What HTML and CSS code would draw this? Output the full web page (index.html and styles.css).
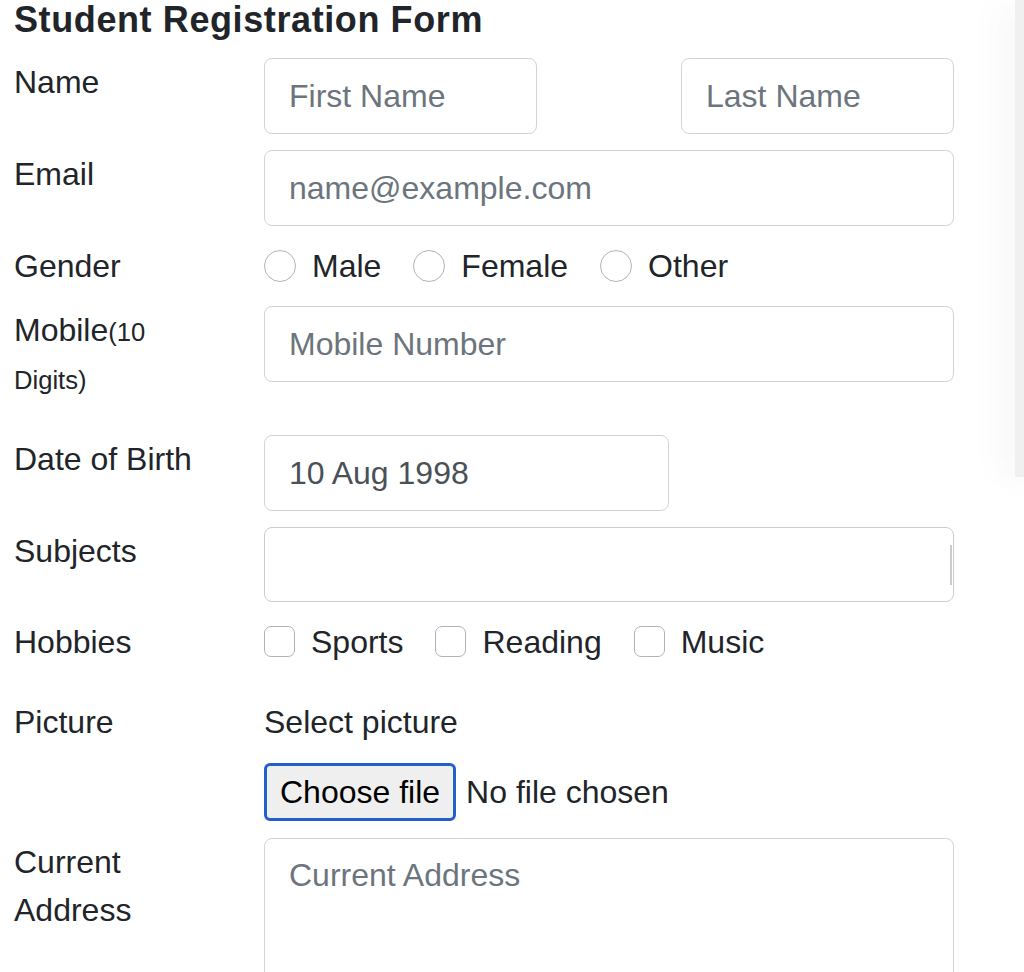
FILE: index.html
```html
<!DOCTYPE html>
<html lang="en">
<head>
<meta charset="utf-8">
<title>Student Registration Form</title>
<link rel="stylesheet" href="styles.css">
</head>
<body>
<div class="page">
  <h1 class="title">Student Registration Form</h1>
  <form class="form">
    <div class="row">
      <label class="lbl">Name</label>
      <div class="field split">
        <input class="ctl half" type="text" placeholder="First Name">
        <input class="ctl half" type="text" placeholder="Last Name">
      </div>
    </div>
    <div class="row">
      <label class="lbl">Email</label>
      <div class="field">
        <input class="ctl" type="text" placeholder="name@example.com">
      </div>
    </div>
    <div class="row">
      <label class="lbl">Gender</label>
      <div class="field checks">
        <label class="check"><input class="radio" type="radio" name="g"><span>Male</span></label>
        <label class="check"><input class="radio" type="radio" name="g"><span>Female</span></label>
        <label class="check"><input class="radio" type="radio" name="g"><span>Other</span></label>
      </div>
    </div>
    <div class="row row-tall">
      <label class="lbl">Mobile<small class="hint">(10</small> <small class="hint">Digits)</small></label>
      <div class="field">
        <input class="ctl" type="text" placeholder="Mobile Number">
      </div>
    </div>
    <div class="row">
      <label class="lbl">Date of Birth</label>
      <div class="field">
        <input class="ctl dob" type="text" value="10 Aug 1998">
      </div>
    </div>
    <div class="row">
      <label class="lbl">Subjects</label>
      <div class="field">
        <div class="select">
          <div class="select-value"></div>
          <span class="select-sep"></span>
        </div>
      </div>
    </div>
    <div class="row row-hobbies">
      <label class="lbl">Hobbies</label>
      <div class="field checks">
        <label class="check"><input class="box" type="checkbox"><span>Sports</span></label>
        <label class="check"><input class="box" type="checkbox"><span>Reading</span></label>
        <label class="check"><input class="box" type="checkbox"><span>Music</span></label>
      </div>
    </div>
    <div class="row row-picture">
      <label class="lbl">Picture</label>
      <div class="field picture">
        <span class="pic-label">Select picture</span>
        <div class="file">
          <span class="file-btn">Choose file</span>
          <span class="file-name">No file chosen</span>
        </div>
      </div>
    </div>
    <div class="row">
      <label class="lbl">Current Address</label>
      <div class="field">
        <textarea class="ctl area" placeholder="Current Address"></textarea>
      </div>
    </div>
  </form>
  <aside class="side-ad"></aside>
</div>
</body>
</html>
```

FILE: styles.css
```css
html {
  overflow: hidden;
}

body {
  margin: 0;
  background: #ffffff;
  color: #212529;
  font-family: "Liberation Sans", Arial, sans-serif;
  font-size: 32px;
}

.page {
  padding-left: 14px;
}

.title {
  margin: 0 0 18px 0;
  font-size: 36px;
  line-height: 40px;
  font-weight: 700;
  letter-spacing: 0.6px;
  color: #212529;
}

.form {
  display: flex;
  flex-direction: column;
  gap: 16px;
}

.row {
  display: grid;
  grid-template-columns: 250px 690px;
  align-items: start;
}

.row-tall {
  padding-bottom: 17px;
}

.row-hobbies {
  padding-bottom: 16px;
}

.row-picture {
  padding-bottom: 1px;
}

.lbl {
  max-width: 196px;
  font-size: 32px;
  line-height: 48px;
  color: #212529;
}

.hint {
  font-size: 25.6px;
  line-height: 30px;
}

.field {
  display: flex;
}

.split {
  justify-content: space-between;
}

.ctl {
  box-sizing: border-box;
  width: 690px;
  height: 76px;
  margin: 0;
  padding: 0 24px;
  border: 1px solid #ced4da;
  border-radius: 8px;
  background: #ffffff;
  font-family: "Liberation Sans", Arial, sans-serif;
  font-size: 32px;
  color: #495057;
  outline: none;
}

.ctl::placeholder {
  color: #6c757d;
  opacity: 1;
}

.half {
  width: 273px;
}

.dob {
  width: 405px;
}

.area {
  height: 266px;
  padding: 12px 24px;
  line-height: 48px;
  resize: none;
  display: block;
}

.checks {
  gap: 32px;
  height: 48px;
}

.check {
  display: flex;
  align-items: flex-start;
  gap: 16px;
  line-height: 48px;
  color: #212529;
}

.radio,
.box {
  appearance: none;
  -webkit-appearance: none;
  box-sizing: border-box;
  width: 32px;
  height: 32px;
  margin: 8px 0 0 0;
  border: 1px solid #adb4bc;
  background: #ffffff;
  flex: none;
}

.radio {
  border-radius: 50%;
}

.box {
  width: 31px;
  height: 31px;
  border-radius: 7px;
}

.select {
  box-sizing: border-box;
  width: 690px;
  height: 75px;
  border: 1px solid #cccccc;
  border-radius: 8px;
  display: flex;
  align-items: center;
  background: #ffffff;
}

.select-value {
  flex: 1;
}

.select-sep {
  width: 2px;
  height: 40px;
  margin-right: 1px;
  background: #cccccc;
}

.picture {
  flex-direction: column;
  align-items: flex-start;
}

.pic-label {
  line-height: 48px;
  margin-bottom: 17px;
}

.file {
  display: flex;
  align-items: center;
  gap: 10px;
}

.file-btn {
  box-sizing: border-box;
  height: 58px;
  padding: 0 13px;
  display: flex;
  align-items: center;
  border: 3px solid #2160c8;
  border-radius: 6px;
  background: #efefef;
  color: #000000;
}

.file-name {
  color: #212529;
}

.side-ad {
  position: absolute;
  top: 0;
  right: 0;
  width: 9px;
  height: 477px;
  background: #f0f0f0;
  box-shadow: -12px 0 36px rgba(0, 0, 0, 0.07), 0 12px 30px rgba(0, 0, 0, 0.05);
}
```
